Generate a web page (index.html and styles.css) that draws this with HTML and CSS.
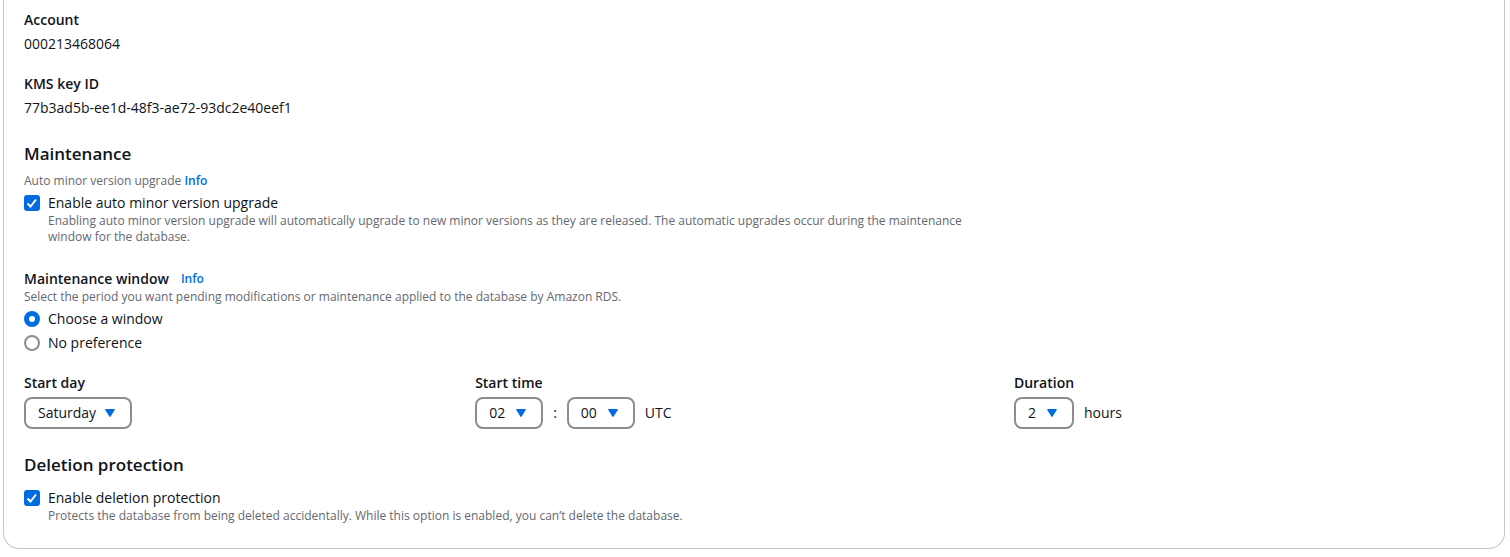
FILE: index.html
```html
<!DOCTYPE html>
<html lang="en">
<head>
<meta charset="utf-8">
<title>Maintenance settings</title>
<link rel="stylesheet" href="styles.css">
</head>
<body>
<main class="panel">
  <dl class="details">
    <div class="detail"><dt>Account</dt><dd>000213468064</dd></div>
    <div class="detail"><dt>KMS key ID</dt><dd>77b3ad5b-ee1d-48f3-ae72-93dc2e40eef1</dd></div>
  </dl>

  <section class="section">
    <h2 class="heading">Maintenance</h2>
    <p class="hint hint-top">Auto minor version upgrade <a class="info" href="#upgrade">Info</a></p>
    <div class="option">
      <span class="tick">
        <input class="checkbox" type="checkbox" id="auto-upgrade" aria-describedby="auto-upgrade-hint" checked>
        <svg class="mark" viewBox="0 0 16 16" aria-hidden="true"><path d="M3.5 8.5 6.5 11.5 12 4.5"/></svg>
      </span>
      <label for="auto-upgrade">Enable auto minor version upgrade</label>
    </div>
    <p class="hint option-hint" id="auto-upgrade-hint">Enabling auto minor version upgrade will automatically upgrade to new minor versions as they are released. The automatic upgrades occur during the maintenance window for the database.</p>

    <fieldset class="window">
      <legend class="label window-label">Maintenance window <a class="info" href="#window">Info</a></legend>
      <p class="hint">Select the period you want pending modifications or maintenance applied to the database by Amazon RDS.</p>
      <div class="radios">
        <div class="option"><input class="radio" type="radio" name="window" id="choose" checked><label for="choose">Choose a window</label></div>
        <div class="option"><input class="radio" type="radio" name="window" id="none"><label for="none">No preference</label></div>
      </div>
    </fieldset>

    <div class="schedule">
      <div class="field">
        <label class="label" for="day">Start day</label>
        <div class="controls">
          <span class="picker picker-day"><select class="select" id="day"><option>Saturday</option></select><svg class="arrow" viewBox="0 0 10 8" aria-hidden="true"><path d="M.8 0H9.2Q10.4 0 9.7 1L5.8 7.3Q5 8.5 4.2 7.3L.3 1Q-.4 0 .8 0Z"/></svg></span>
        </div>
      </div>
      <div class="field">
        <label class="label" for="hour">Start time</label>
        <div class="controls">
          <span class="picker picker-time"><select class="select" id="hour"><option>02</option></select><svg class="arrow" viewBox="0 0 10 8" aria-hidden="true"><path d="M.8 0H9.2Q10.4 0 9.7 1L5.8 7.3Q5 8.5 4.2 7.3L.3 1Q-.4 0 .8 0Z"/></svg></span>
          <span>:</span>
          <span class="picker picker-time"><select class="select" aria-label="Start minute"><option>00</option></select><svg class="arrow" viewBox="0 0 10 8" aria-hidden="true"><path d="M.8 0H9.2Q10.4 0 9.7 1L5.8 7.3Q5 8.5 4.2 7.3L.3 1Q-.4 0 .8 0Z"/></svg></span>
          <span>UTC</span>
        </div>
      </div>
      <div class="field">
        <label class="label" for="duration">Duration</label>
        <div class="controls">
          <span class="picker picker-duration"><select class="select" id="duration"><option>2</option></select><svg class="arrow" viewBox="0 0 10 8" aria-hidden="true"><path d="M.8 0H9.2Q10.4 0 9.7 1L5.8 7.3Q5 8.5 4.2 7.3L.3 1Q-.4 0 .8 0Z"/></svg></span>
          <span>hours</span>
        </div>
      </div>
    </div>
  </section>

  <section class="section">
    <h2 class="heading heading-deletion">Deletion protection</h2>
    <div class="option">
      <span class="tick">
        <input class="checkbox" type="checkbox" id="deletion" aria-describedby="deletion-hint" checked>
        <svg class="mark" viewBox="0 0 16 16" aria-hidden="true"><path d="M3.5 8.5 6.5 11.5 12 4.5"/></svg>
      </span>
      <label for="deletion">Enable deletion protection</label>
    </div>
    <p class="hint option-hint" id="deletion-hint">Protects the database from being deleted accidentally. While this option is enabled, you can’t delete the database.</p>
  </section>
</main>
</body>
</html>
```
FILE: styles.css
```css
* { box-sizing: border-box; }

body {
  margin: 0;
  background: #fff;
  color: #0f141a;
  font: 14px/20px "Open Sans", "Noto Sans", sans-serif;
}

.panel {
  margin: 0 5px 0 3px;
  padding: 10px 20px 24px;
  border: 1px solid #c6c6cd;
  border-top: 0;
  border-radius: 0 0 16px 16px;
}

.details, .details dd, .heading, .hint { margin: 0; }

.details {
  display: grid;
  gap: 20px;
}

.detail {
  display: grid;
  gap: 4px;
}

.detail dt, .label { font-weight: 600; }

.section { margin-top: 24px; }

.heading {
  font-size: 17px;
  font-weight: 600;
  line-height: 24px;
}

.heading-deletion { margin-bottom: 11px; }

.hint {
  color: #656871;
  font-size: 12px;
  line-height: 16px;
}

.hint-top { margin: 7px 0 4px; }

.info {
  color: #006ce0;
  font-size: 12px;
  font-weight: 600;
  line-height: 16px;
  text-decoration: none;
}

.option {
  display: flex;
  align-items: center;
  gap: 8px;
}

.option-hint {
  max-width: 940px;
  padding-left: 24px;
}

.tick {
  position: relative;
  display: flex;
}

.checkbox, .radio {
  appearance: none;
  width: 16px;
  height: 16px;
  margin: 0;
  border: 2px solid #8c8c94;
  border-radius: 3px;
}

.checkbox:checked {
  border-color: #006ce0;
  background: #006ce0;
}

.mark {
  position: absolute;
  inset: 0;
  fill: none;
  stroke: #fff;
  stroke-width: 2;
  opacity: 0;
  pointer-events: none;
}

.checkbox:checked + .mark { opacity: 1; }

.radio { border-radius: 50%; }

.radio:checked { border: 5px solid #006ce0; }

.window {
  min-width: 0;
  margin: 24px 0 20px;
  padding: 0;
  border: 0;
}

.window-label {
  display: flex;
  align-items: center;
  gap: 12px;
  padding: 0;
}

.radios {
  display: grid;
  gap: 4px;
  margin-top: 4px;
}

.schedule {
  display: grid;
  grid-template-columns: 309fr 369fr 322fr;
}

.field {
  display: grid;
  gap: 4px;
}

.controls {
  display: flex;
  align-items: center;
  gap: 10px;
}

.picker {
  position: relative;
  display: flex;
}

.picker-day { width: 108px; }
.picker-time { width: 68px; }
.picker-duration { width: 60px; }

.select {
  appearance: none;
  width: 100%;
  height: 32px;
  padding: 0 12px;
  border: 2px solid #8c8c94;
  border-radius: 8px;
  background: #fff;
  color: inherit;
  font: inherit;
}

.arrow {
  position: absolute;
  top: 12px;
  right: 17px;
  width: 10px;
  height: 8px;
  fill: #006ce0;
  pointer-events: none;
}
```
